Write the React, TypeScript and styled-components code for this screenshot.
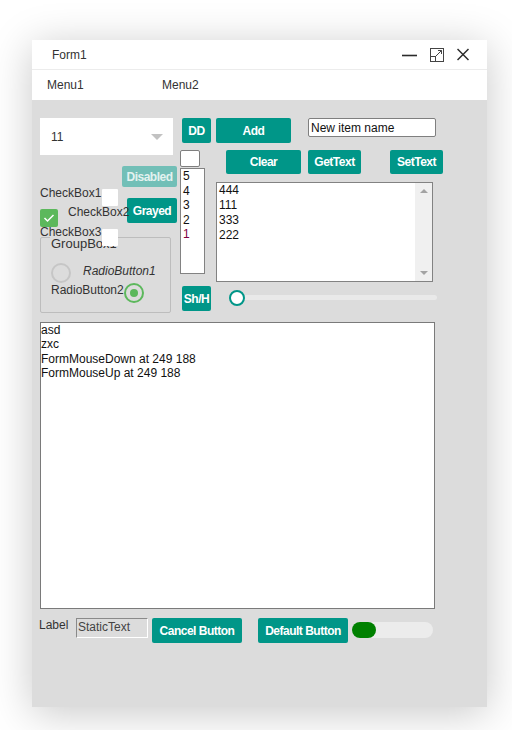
import React from "react";
import styled, { createGlobalStyle, css } from "styled-components";

const GlobalStyle = createGlobalStyle`
  html, body {
    margin: 0;
    padding: 0;
    background: #fff;
  }
  body {
    font-family: "Liberation Sans", Arial, sans-serif;
  }
`;

type Box = { $x: number; $y: number; $w?: number; $h?: number };

// controls sit on a form canvas at their designer coordinates
const placed = css<Box>`
  position: absolute;
  box-sizing: border-box;
  left: ${(p) => p.$x}px;
  top: ${(p) => p.$y}px;
  ${(p) => (p.$w !== undefined ? `width: ${p.$w}px;` : "")}
  ${(p) => (p.$h !== undefined ? `height: ${p.$h}px;` : "")}
`;

const Page = styled.div`
  box-sizing: border-box;
  min-height: 730px;
  padding: 40px 0 0 32px;
`;

const Window = styled.div`
  width: 455px;
  height: 667px;
  display: flex;
  flex-direction: column;
  background: #fff;
  box-shadow: 0 6px 40px rgba(0, 0, 0, 0.22);
`;

const TitleBar = styled.div`
  box-sizing: border-box;
  height: 30px;
  border-bottom: 1px solid #ececec;
  display: flex;
  align-items: center;
  justify-content: space-between;
  padding: 0 18px 0 20px;
  font-size: 12px;
  color: #333;
`;

const WindowButtons = styled.div`
  display: flex;
  align-items: center;
  gap: 13px;
`;

const MenuBar = styled.div`
  height: 30px;
  display: flex;
  align-items: center;
  padding-left: 15px;
`;

const MenuItem = styled.div`
  width: 115px;
  font-size: 12px;
  color: #333;
`;

const FormCanvas = styled.div`
  flex: 1;
  position: relative;
  background: #dcdcdc;
  font-size: 12px;
  color: #333;
`;

const Button = styled.div<Box & { $off?: boolean }>`
  ${placed};
  display: flex;
  align-items: center;
  justify-content: center;
  background: ${(p) => (p.$off ? "#72bfb7" : "#009688")};
  color: ${(p) => (p.$off ? "#e3f2f0" : "#fff")};
  border-radius: 2px;
  font-weight: bold;
  font-size: 12px;
  letter-spacing: -0.5px;
  white-space: nowrap;
`;

const ComboBox = styled.div<Box>`
  ${placed};
  background: #fff;
  display: flex;
  align-items: center;
  justify-content: space-between;
  padding: 0 10px 0 11px;
  color: #333;
`;

const Chevron = styled.span`
  width: 0;
  height: 0;
  border-left: 6px solid transparent;
  border-right: 6px solid transparent;
  border-top: 6px solid #c2c2c2;
`;

const TextField = styled.div<Box>`
  ${placed};
  background: #fff;
  border: 1px solid #7f7f7f;
  border-radius: 2px;
  padding: 0 2px;
  line-height: 18px;
  color: #111;
`;

const ListBox = styled.div<Box>`
  ${placed};
  background: #fff;
  border: 1px solid #828282;
  display: flex;
`;

const ListItems = styled.div<{ $line: number }>`
  flex: 1;
  padding: 0 2px;
  line-height: ${(p) => p.$line}px;
  color: #111;
`;

const ListItem = styled.div<{ $color?: string }>`
  color: ${(p) => p.$color ?? "#111"};
`;

const ScrollTrack = styled.div`
  width: 17px;
  background: #f0f0f0;
  display: flex;
  flex-direction: column;
  justify-content: space-between;
  align-items: center;
  padding: 6px 0;
`;

const Arrow = styled.span<{ $up?: boolean }>`
  width: 0;
  height: 0;
  border-left: 4px solid transparent;
  border-right: 4px solid transparent;
  ${(p) =>
    p.$up ? "border-bottom: 4px solid #a3a3a3;" : "border-top: 4px solid #a3a3a3;"}
`;

const CheckLabel = styled.div<Box & { $italic?: boolean }>`
  ${placed};
  line-height: 14px;
  white-space: nowrap;
  color: #333;
  font-style: ${(p) => (p.$italic ? "italic" : "normal")};
`;

const CheckSquare = styled.div<Box>`
  ${placed};
  background: #fff;
  border-radius: 1px;
`;

const CheckedBox = styled.div<Box>`
  ${placed};
  background: #5cb85c;
  border-radius: 2px;
  display: flex;
  align-items: center;
  justify-content: center;
`;

const GroupFrame = styled.div<Box>`
  ${placed};
  border: 1px solid #bdbdbd;
  border-radius: 2px;
`;

const GroupCaption = styled.span`
  position: absolute;
  left: 9px;
  top: -2px;
  padding: 0 1px;
  background: #dcdcdc;
  font-size: 13px;
  line-height: 16px;
  color: #333;
`;

const Radio = styled.div<Box & { $checked?: boolean }>`
  ${placed};
  border-radius: 50%;
  border: 2px solid ${(p) => (p.$checked ? "#5cb85c" : "#c6c6c6")};
  display: flex;
  align-items: center;
  justify-content: center;
  &::after {
    content: "";
    display: ${(p) => (p.$checked ? "block" : "none")};
    width: 8px;
    height: 8px;
    border-radius: 50%;
    background: #5cb85c;
  }
`;

const SliderTrack = styled.div<Box>`
  ${placed};
  background: #e9e9e9;
  border-radius: 3px;
`;

const SliderThumb = styled.div`
  position: absolute;
  left: -8px;
  top: -5.5px;
  box-sizing: border-box;
  width: 16px;
  height: 16px;
  border-radius: 50%;
  background: #fff;
  border: 2.5px solid #009688;
`;

const Memo = styled.div<Box>`
  ${placed};
  background: #fff;
  border: 1px solid #7a7a7a;
  line-height: 14.4px;
  color: #111;
`;

const StaticText = styled.div<Box>`
  ${placed};
  border-top: 1px solid #8a8a8a;
  border-left: 1px solid #8a8a8a;
  border-right: 1px solid #fff;
  border-bottom: 1px solid #fff;
  line-height: 17px;
  padding-left: 1px;
  color: #444;
`;

const Toggle = styled.div<Box>`
  ${placed};
  background: #ececec;
  border-radius: 8px;
  display: flex;
`;

const ToggleKnob = styled.span`
  width: 24px;
  height: 100%;
  border-radius: 8px;
  background: #008000;
`;

const MinimizeIcon = () => (
  <svg width="15" height="14" viewBox="0 0 15 14">
    <line x1="0" y1="7.5" x2="15" y2="7.5" stroke="#2b2b2b" strokeWidth="1.6" />
  </svg>
);

const MaximizeIcon = () => (
  <svg width="14" height="14" viewBox="0 0 14 14" fill="none" stroke="#444" strokeWidth="1">
    <rect x="0.5" y="0.5" width="13" height="13" />
    <rect x="0.5" y="8.5" width="5" height="5" />
    <path d="M6 8 L11.5 2.5 M8 2.5 H11.5 V6" />
  </svg>
);

const CloseIcon = () => (
  <svg width="12" height="13" viewBox="0 0 12 13" stroke="#2b2b2b" strokeWidth="1.5">
    <path d="M0.5 1 L11.5 12 M11.5 1 L0.5 12" />
  </svg>
);

const CheckMark = () => (
  <svg width="12" height="10" viewBox="0 0 12 10" fill="none" stroke="#fff" strokeWidth="1.5">
    <path d="M1.5 5 L4.5 8 L10.5 2" />
  </svg>
);

const App: React.FC = () => {
  return (
    <Page>
      <GlobalStyle />
      <Window>
        <TitleBar>
          <span>Form1</span>
          <WindowButtons>
            <MinimizeIcon />
            <MaximizeIcon />
            <CloseIcon />
          </WindowButtons>
        </TitleBar>
        <MenuBar>
          <MenuItem>Menu1</MenuItem>
          <MenuItem>Menu2</MenuItem>
        </MenuBar>
        <FormCanvas>
          <ComboBox $x={8} $y={18} $w={133} $h={37}>
            <span>11</span>
            <Chevron />
          </ComboBox>

          <Button $x={150} $y={18} $w={29} $h={25}>DD</Button>
          <Button $x={184} $y={18} $w={75} $h={25}>Add</Button>
          <TextField $x={276} $y={18} $w={128} $h={19}>New item name</TextField>

          <TextField $x={148} $y={50} $w={20} $h={17} />
          <Button $x={194} $y={50} $w={75} $h={24}>Clear</Button>
          <Button $x={276} $y={50} $w={53} $h={24}>GetText</Button>
          <Button $x={358} $y={50} $w={53} $h={24}>SetText</Button>

          <Button $x={90} $y={66} $w={55} $h={21} $off>Disabled</Button>
          <Button $x={95} $y={98} $w={50} $h={25}>Grayed</Button>

          <ListBox $x={148} $y={68} $w={25} $h={106}>
            <ListItems $line={14.5}>
              <ListItem>5</ListItem>
              <ListItem>4</ListItem>
              <ListItem>3</ListItem>
              <ListItem>2</ListItem>
              <ListItem $color="#800040">1</ListItem>
            </ListItems>
          </ListBox>

          <ListBox $x={184} $y={82} $w={217} $h={100}>
            <ListItems $line={15}>
              <ListItem>444</ListItem>
              <ListItem>111</ListItem>
              <ListItem>333</ListItem>
              <ListItem>222</ListItem>
            </ListItems>
            <ScrollTrack>
              <Arrow $up />
              <Arrow />
            </ScrollTrack>
          </ListBox>

          <GroupFrame $x={8} $y={137} $w={131} $h={76}>
            <GroupCaption>GroupBox1</GroupCaption>
          </GroupFrame>

          <CheckLabel $x={8} $y={86}>CheckBox1</CheckLabel>
          <CheckSquare $x={70} $y={89} $w={16} $h={17} />
          <CheckedBox $x={8} $y={109} $w={18} $h={18}>
            <CheckMark />
          </CheckedBox>
          <CheckLabel $x={36} $y={105}>CheckBox2</CheckLabel>
          <CheckLabel $x={8} $y={125}>CheckBox3</CheckLabel>
          <CheckSquare $x={70} $y={129} $w={16} $h={17} />

          <Radio $x={19} $y={163} $w={20} $h={20} />
          <CheckLabel $x={51} $y={164} $italic>RadioButton1</CheckLabel>
          <CheckLabel $x={19} $y={183}>RadioButton2</CheckLabel>
          <Radio $x={92} $y={183} $w={20} $h={20} $checked />

          <Button $x={150} $y={186} $w={29} $h={25}>Sh/H</Button>
          <SliderTrack $x={205} $y={195} $w={200} $h={5}>
            <SliderThumb />
          </SliderTrack>

          <Memo $x={8} $y={222} $w={395} $h={287}>
            <div>asd</div>
            <div>zxc</div>
            <div>FormMouseDown at 249 188</div>
            <div>FormMouseUp at 249 188</div>
          </Memo>

          <CheckLabel $x={7} $y={518}>Label</CheckLabel>
          <StaticText $x={44} $y={518} $w={72} $h={20}>StaticText</StaticText>
          <Button $x={120} $y={518} $w={90} $h={25}>Cancel Button</Button>
          <Button $x={226} $y={518} $w={90} $h={25}>Default Button</Button>
          <Toggle $x={320} $y={522} $w={81} $h={16}>
            <ToggleKnob />
          </Toggle>
        </FormCanvas>
      </Window>
    </Page>
  );
};

export default App;
